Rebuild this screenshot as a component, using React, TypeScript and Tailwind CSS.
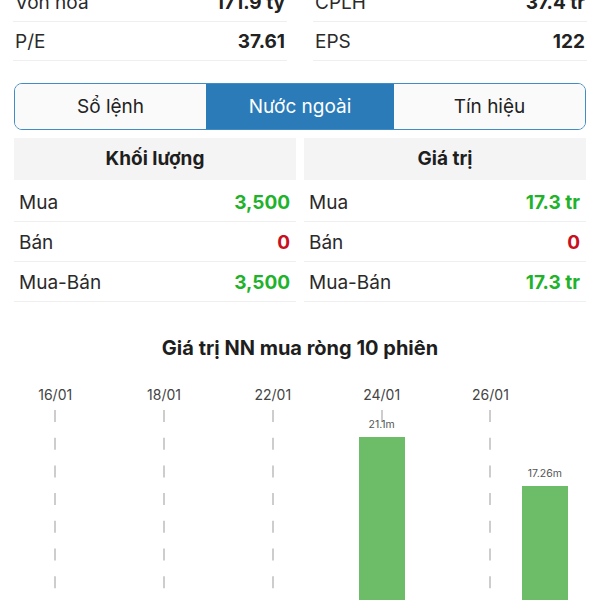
import React from "react";

const stats = [
  [
    { label: "Vốn hoá", value: "171.9 tỷ" },
    { label: "CPLH", value: "37.4 tr" },
  ],
  [
    { label: "P/E", value: "37.61" },
    { label: "EPS", value: "122" },
  ],
];

const sessions = [
  { date: "16/01", value: 0 },
  { date: "17/01", value: 0 },
  { date: "18/01", value: 0 },
  { date: "19/01", value: 0 },
  { date: "22/01", value: 0 },
  { date: "23/01", value: 0 },
  { date: "24/01", value: 21.1, text: "21.1m" },
  { date: "25/01", value: 0 },
  { date: "26/01", value: 0 },
  { date: "29/01", value: 17.26, text: "17.26m" },
];

function StatCell({ label, value }: { label: string; value: string }) {
  return (
    <div className="flex h-[39px] items-center justify-between border-b border-[#efefef] px-[2px] pt-[2px]">
      <span className="text-[19px] text-[#2a2a2a]">{label}</span>
      <span className="text-[19px] font-bold text-[#222]">{value}</span>
    </div>
  );
}

function Table({
  title,
  rows,
}: {
  title: string;
  rows: { label: string; value: string; color: string }[];
}) {
  return (
    <div className="flex flex-col">
      <div className="flex h-[42px] items-center justify-center bg-[#f4f4f4] text-[19px] font-bold text-[#1e1e1e]">
        {title}
      </div>
      <div className="mt-[2px] flex flex-col">
        {rows.map((r) => (
          <div
            key={r.label}
            className="flex h-[40px] items-center justify-between border-b border-[#efefef] pl-[5px] pr-[6px] pt-[4px]"
          >
            <span className="text-[19px] text-[#2a2a2a]">{r.label}</span>
            <span className={`text-[19px] font-bold ${r.color}`}>{r.value}</span>
          </div>
        ))}
      </div>
    </div>
  );
}

export default function App() {
  const green = "text-[#1fb22b]";
  const red = "text-[#c8101e]";
  return (
    <div className="h-[600px] w-[600px] overflow-hidden bg-white font-['Inter',sans-serif]">
      <div className="-mt-[17px] flex flex-col">
        <div className="grid grid-cols-2 gap-x-[26px] px-[13px]">
          {stats.map((row) =>
            row.map((c) => <StatCell key={c.label} label={c.label} value={c.value} />)
          )}
        </div>

        <div className="mx-[14px] mt-[22px] flex h-[47px] overflow-hidden rounded-[8px] border border-[#3f8cc6]">
          <div className="flex flex-1 items-center justify-center bg-[#fafafa] pt-[2px] text-[19px] text-[#222]">
            Sổ lệnh
          </div>
          <div className="flex w-[188px] items-center justify-center bg-[#2a7bb8] pt-[2px] text-[19px] text-white">
            Nước ngoài
          </div>
          <div className="flex flex-1 items-center justify-center bg-[#fafafa] pt-[2px] text-[19px] text-[#222]">
            Tín hiệu
          </div>
        </div>

        <div className="mt-[8px] grid grid-cols-2 gap-x-[8px] px-[14px]">
          <Table
            title="Khối lượng"
            rows={[
              { label: "Mua", value: "3,500", color: green },
              { label: "Bán", value: "0", color: red },
              { label: "Mua-Bán", value: "3,500", color: green },
            ]}
          />
          <Table
            title="Giá trị"
            rows={[
              { label: "Mua", value: "17.3 tr", color: green },
              { label: "Bán", value: "0", color: red },
              { label: "Mua-Bán", value: "17.3 tr", color: green },
            ]}
          />
        </div>

        <div className="mt-[34px] text-center text-[20px] leading-[24px] font-bold text-[#1e1e1e]">
          Giá trị NN mua ròng 10 phiên
        </div>

        <div className="mt-[25px] flex px-[28px]">
          {sessions.map((s, i) => {
            const showLabel = i % 2 === 0;
            return (
              <div key={s.date} className="flex flex-1 flex-col items-center">
                <div className="h-[20px] text-[14px] leading-[20px] text-[#444]">
                  {showLabel ? s.date : ""}
                </div>
                <div className="relative mt-[5px] h-[296px] w-full">
                  {showLabel && (
                    <svg
                      className="absolute left-1/2 top-0 -translate-x-1/2"
                      width="2"
                      height="296"
                    >
                      <line
                        x1="1"
                        y1="0"
                        x2="1"
                        y2="296"
                        stroke="#bdbdbd"
                        strokeWidth="1.5"
                        strokeDasharray="12 15.7"
                      />
                    </svg>
                  )}
                  {s.value > 0 && (
                    <div className="absolute inset-x-0 bottom-0 flex flex-col items-center">
                      <span className="mb-[6px] text-[10.5px] leading-[12px] text-[#555]">
                        {s.text}
                      </span>
                      <div
                        className="w-[46px] bg-[#6dbd68]"
                        style={{ height: `${s.value * 12.75}px` }}
                      />
                    </div>
                  )}
                </div>
              </div>
            );
          })}
        </div>
      </div>
    </div>
  );
}
